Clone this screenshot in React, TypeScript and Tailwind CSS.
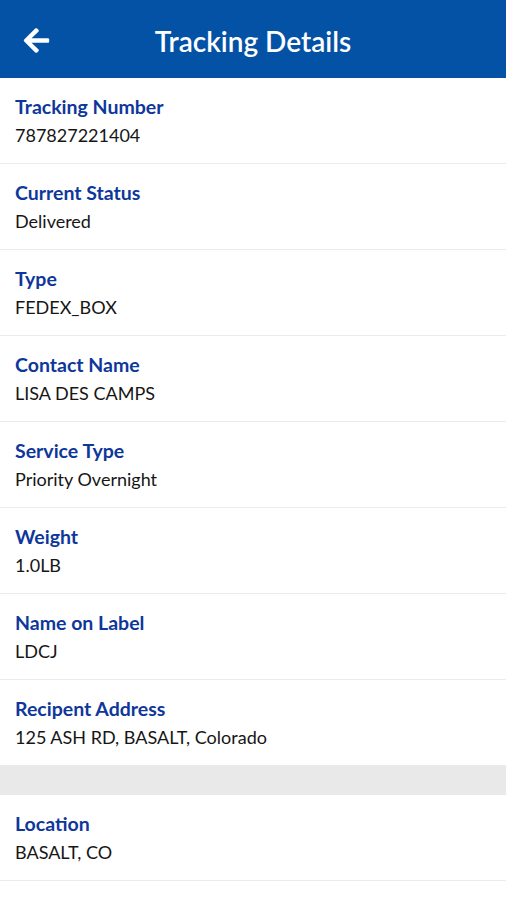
import { FaArrowLeft } from "react-icons/fa";

// ── data ──────────────────────────────────────────────────────────────────────
const details = [
  { label: "Tracking Number", value: "787827221404" },
  { label: "Current Status", value: "Delivered" },
  { label: "Type", value: "FEDEX_BOX" },
  { label: "Contact Name", value: "LISA DES CAMPS" },
  { label: "Service Type", value: "Priority Overnight" },
  { label: "Weight", value: "1.0LB" },
  { label: "Name on Label", value: "LDCJ" },
  { label: "Recipent Address", value: "125 ASH RD, BASALT, Colorado" },
];

// ── DetailRow ─────────────────────────────────────────────────────────────────
function DetailRow({ label, value }: { label: string; value: string }) {
  return (
    <div className="h-[86px] border-b border-[#ebebeb] px-[15px] pt-[16px]">
      <div className="text-[19.5px] leading-[26px] font-bold text-[#0e379b]">{label}</div>
      <div className="text-[18px] leading-[30px] text-[#161616]">{value}</div>
    </div>
  );
}

export default function App() {
  return (
    <div className="w-[506px] h-[900px] bg-white font-['Lato',sans-serif] overflow-hidden">
      <header className="h-[78px] bg-[#0352a6] flex items-center relative">
        <button className="absolute left-[22px] top-[26px] text-white">
          <FaArrowLeft size={29} />
        </button>
        <h1 className="flex-1 text-center text-white text-[28px] font-semibold pt-[3px]">
          Tracking Details
        </h1>
      </header>
      {details.map((d) => (
        <DetailRow key={d.label} {...d} />
      ))}
      <div className="h-[29px] bg-[#e9e9e9]" />
      <DetailRow label="Location" value="BASALT, CO" />
    </div>
  );
}
